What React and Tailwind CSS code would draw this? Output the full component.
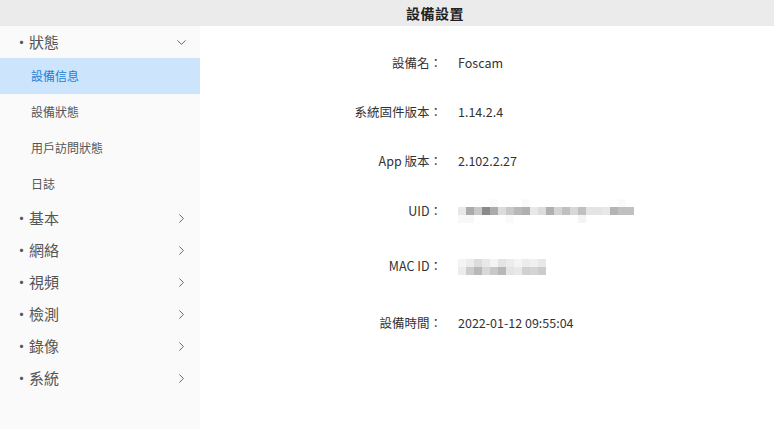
import { ChevronDown, ChevronRight } from "lucide-react";

const CJK = "font-['Segoe_UI','Noto_Sans_CJK_TC',sans-serif]";

const SUB_ITEMS = ["設備信息", "設備狀態", "用戶訪問狀態", "日誌"];
const GROUPS = ["基本", "網絡", "視頻", "檢測", "錄像", "系統"];

// mosaic blocks hiding the UID / MAC values
const UID_TOP = [
  "bg-white", "bg-white", "bg-white", "bg-white", "bg-[#fafafa]", "bg-white", "bg-white", "bg-white", "bg-[#fafafa]", "bg-white", "bg-white",
  "bg-white", "bg-white", "bg-white", "bg-white", "bg-white", "bg-white", "bg-white", "bg-white", "bg-white", "bg-[#fafafa]", "bg-white",
];
const UID_MID = [
  "bg-[#e8e8e8]", "bg-[#aaaaaa]", "bg-[#c8c8c8]", "bg-[#8a8a8a]", "bg-[#ababab]", "bg-[#dcdcdc]", "bg-[#c8c8c8]", "bg-[#b8b8b8]", "bg-[#b0b0b0]", "bg-[#e8e8e8]", "bg-[#dcdcdc]",
  "bg-[#b0b0b0]", "bg-[#d4d4d4]", "bg-[#c0c0c0]", "bg-[#d8d8d8]", "bg-[#c0c0c0]", "bg-[#e4e4e4]", "bg-[#e4e4e4]", "bg-[#e8e8e8]", "bg-[#b4b4b4]", "bg-[#c0c0c0]", "bg-[#c0c0c0]",
];
const UID_BOT = [
  "bg-[#f8f8f8]", "bg-[#f8f8f8]", "bg-white", "bg-white", "bg-white", "bg-white", "bg-[#fafafa]", "bg-white", "bg-white", "bg-white", "bg-white",
  "bg-white", "bg-white", "bg-white", "bg-white", "bg-[#f4f4f4]", "bg-white", "bg-white", "bg-white", "bg-white", "bg-white", "bg-white",
];
const MAC_TOP = [
  "bg-[#f4f4f4]", "bg-[#ececec]", "bg-[#dcdcdc]", "bg-[#e8e8e8]", "bg-[#f4f4f4]", "bg-[#e4e4e4]", "bg-[#ececec]", "bg-[#f4f4f4]", "bg-[#ececec]", "bg-[#f0f0f0]", "bg-[#e8e8e8]",
];
const MAC_BOT = [
  "bg-[#ececec]", "bg-[#cccccc]", "bg-[#b8b8b8]", "bg-[#d8d8d8]", "bg-[#c8c8c8]", "bg-[#b8b8b8]", "bg-[#e4e4e4]", "bg-[#e8e8e8]", "bg-[#d0d0d0]", "bg-[#d4d4d4]", "bg-[#cccccc]",
];

function Mosaic({ rows }) {
  return (
    <div className="flex flex-col">
      {rows.map((row, i) => (
        <div key={i} className="flex">
          {row.map((c, j) => (
            <div key={j} className={`w-2 h-2 ${c}`} />
          ))}
        </div>
      ))}
    </div>
  );
}

function InfoRow({ label, children, className = "" }) {
  return (
    <div className={`flex items-center ${className}`}>
      <div className="w-[242px] text-right text-[12.5px] text-[#333]">{label}</div>
      <div className="pl-4 text-[12.5px] text-[#333]">{children}</div>
    </div>
  );
}

export default function App() {
  return (
    <div className={`w-[774px] h-[429px] bg-white flex flex-col overflow-hidden ${CJK}`}>
      {/* Header */}
      <header className="h-[26px] shrink-0 bg-[#ebebeb] flex items-center justify-center pl-[96px]">
        <h1 className="text-[14px] font-bold text-[#222] tracking-[0.5px]">設備設置</h1>
      </header>

      <div className="flex flex-1 min-h-0">
        {/* Sidebar */}
        <aside className="w-[200px] shrink-0 bg-[#fafafa] h-full">
          <div className="h-8 flex items-center justify-between pl-[14px] pr-[11px] text-[15px] text-[#555]">
            <span>·狀態</span>
            <ChevronDown size={15} strokeWidth={1.3} className="text-[#444]" />
          </div>
          {SUB_ITEMS.map((s, i) => (
            <div
              key={s}
              className={`h-9 flex items-center pl-[31px] text-[12px] ${
                i === 0 ? "bg-[#cce4fc] text-[#1e7fd6]" : "text-[#555]"
              }`}
            >
              {s}
            </div>
          ))}
          {GROUPS.map((g) => (
            <div key={g} className="h-8 flex items-center justify-between pl-[14px] pr-[11px] text-[15px] text-[#555]">
              <span>·{g}</span>
              <ChevronRight size={15} strokeWidth={1.3} className="text-[#444]" />
            </div>
          ))}
        </aside>

        {/* Device info */}
        <main className="flex-1 flex flex-col pt-[28px]">
          <InfoRow label="設備名：">Foscam</InfoRow>
          <InfoRow label="系統固件版本：" className="mt-[30px]">1.14.2.4</InfoRow>
          <InfoRow label="App 版本：" className="mt-[30px]">2.102.2.27</InfoRow>
          <InfoRow label="UID：" className="mt-[29px]">
            <Mosaic rows={[UID_TOP, UID_MID, UID_BOT]} />
          </InfoRow>
          <InfoRow label="MAC ID：" className="mt-[34px]">
            <Mosaic rows={[MAC_TOP, MAC_BOT]} />
          </InfoRow>
          <InfoRow label="設備時間：" className="mt-[38px]">2022-01-12 09:55:04</InfoRow>
        </main>
      </div>
    </div>
  );
}
